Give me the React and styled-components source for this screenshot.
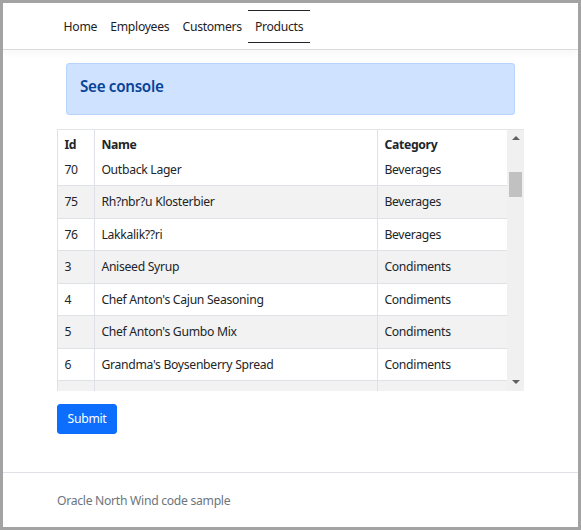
import React from 'react'
import styled, { createGlobalStyle } from 'styled-components'

const products = [
   { id: 70, name: 'Outback Lager', category: 'Beverages' },
   { id: 75, name: 'Rh?nbr?u Klosterbier', category: 'Beverages' },
   { id: 76, name: 'Lakkalik??ri', category: 'Beverages' },
   { id: 3, name: 'Aniseed Syrup', category: 'Condiments' },
   { id: 4, name: "Chef Anton's Cajun Seasoning", category: 'Condiments' },
   { id: 5, name: "Chef Anton's Gumbo Mix", category: 'Condiments' },
   { id: 6, name: "Grandma's Boysenberry Spread", category: 'Condiments' },
   // row below is scrolled almost out of view, only its background shows
   { id: null, name: '', category: '' },
]

const links = ['Home', 'Employees', 'Customers', 'Products']

function App() {
   return (
      <>
         <GlobalStyle />
         <Frame>
            <Nav>
               <Container>
                  {links.map((l) => (
                     <NavLink key={l} active={l === 'Products'}>
                        {l}
                     </NavLink>
                  ))}
               </Container>
            </Nav>
            <Main>
               <Container column>
                  <Alert>See console</Alert>
                  <TableBox>
                     <Viewport>
                        <HeadRow>
                           <Cell w={37} bold>Id</Cell>
                           <Cell w={283} bold>Name</Cell>
                           <Cell w={130} bold>Category</Cell>
                        </HeadRow>
                        <Rows>
                           {products.map((p, i) => (
                              <Row key={i} striped={i % 2 === 1}>
                                 <Cell w={37}>{p.id}</Cell>
                                 <Cell w={283}>{p.name}</Cell>
                                 <Cell w={130}>{p.category}</Cell>
                              </Row>
                           ))}
                        </Rows>
                     </Viewport>
                     <Scrollbar>
                        <Arrow />
                        <Track>
                           <Thumb />
                        </Track>
                        <Arrow down />
                     </Scrollbar>
                  </TableBox>
                  <Button>Submit</Button>
               </Container>
            </Main>
            <Footer>
               <Container>Oracle North Wind code sample</Container>
            </Footer>
         </Frame>
      </>
   )
}

export default App

const GlobalStyle = createGlobalStyle`
   * {
      box-sizing: border-box;
   }
   html, body {
      margin: 0;
      padding: 0;
      background: #fff;
   }
   body {
      font-family: "Segoe UI", "Noto Sans", "Open Sans", sans-serif;
      font-size: 12.2px;
      letter-spacing: -0.3px;
      line-height: 1.5;
      color: #212529;
   }
`
const Frame = styled.div`
   width: 581px;
   height: 530px;
   border: 3px solid #a3a3a3;
   display: flex;
   flex-direction: column;
   background: #fff;
   overflow: hidden;
`
const Container = styled.div`
   width: 467px;
   margin: 0 auto;
   display: flex;
   flex-direction: ${({ column }) => (column ? 'column' : 'row')};
   align-items: ${({ column }) => (column ? 'stretch' : 'center')};
`
const Nav = styled.nav`
   height: 47px;
   flex-shrink: 0;
   display: flex;
   align-items: center;
   border-bottom: 1px solid #dcdcdc;
   box-shadow: 0 3px 8px rgba(0, 0, 0, 0.04);
   position: relative;
   z-index: 1;
`
const NavLink = styled.a`
   display: block;
   padding: 6.4px 6.6px;
   line-height: 19.2px;
   color: #1e2125;
   cursor: pointer;
   border-top: 1px solid ${({ active }) => (active ? '#212529' : 'transparent')};
   border-bottom: 1px solid ${({ active }) => (active ? '#212529' : 'transparent')};
   margin-top: 1px;
`
const Main = styled.main`
   flex: 1;
   padding-top: 13px;
`
const Alert = styled.div`
   margin: 0 9px 14px;
   padding: 10px 13px 15.6px;
   background: #cfe2ff;
   border: 1px solid #b6d4fe;
   border-radius: 3px;
   color: #084298;
   font-size: 15.2px;
   font-weight: 600;
   letter-spacing: -0.3px;
   line-height: 24px;
`
const TableBox = styled.div`
   display: flex;
   height: 262px;
   border-top: 1px solid #e3e5e8;
   overflow: hidden;
`
const Viewport = styled.div`
   width: 450px;
   display: flex;
   flex-direction: column;
   overflow: hidden;
   border-left: 1px solid #dee2e6;
`
const HeadRow = styled.div`
   display: flex;
   height: 31.5px;
   flex-shrink: 0;
   background: #fff;
   position: relative;
   z-index: 1;
   & > div {
      padding-top: 5.4px;
   }
`
const Rows = styled.div`
   margin-top: -7.5px;
   display: flex;
   flex-direction: column;
`
const Row = styled.div`
   display: flex;
   height: 32.5px;
   flex-shrink: 0;
   background: ${({ striped }) => (striped ? '#f2f2f2' : '#fff')};
   border-bottom: 1px solid #dee2e6;
`
const Cell = styled.div`
   width: ${({ w }) => w}px;
   flex-shrink: 0;
   padding: 6.4px 6.4px;
   line-height: 19.2px;
   font-weight: ${({ bold }) => (bold ? 700 : 400)};
   border-right: 1px solid #dee2e6;
   white-space: nowrap;
   overflow: hidden;
`
const Scrollbar = styled.div`
   width: 17px;
   flex-shrink: 0;
   background: #f0f0f0;
   display: flex;
   flex-direction: column;
   align-items: center;
`
const Arrow = styled.div`
   height: 17px;
   flex-shrink: 0;
   display: flex;
   align-items: center;
   justify-content: center;
   &::before {
      content: '';
      border-left: 4px solid transparent;
      border-right: 4px solid transparent;
      ${({ down }) =>
         down ? 'border-top: 4px solid #606060;' : 'border-bottom: 4px solid #606060;'}
   }
`
const Track = styled.div`
   flex: 1;
   width: 100%;
   padding: 25px 2px 0;
`
const Thumb = styled.div`
   height: 25px;
   background: #c1c1c1;
`
const Button = styled.button`
   align-self: flex-start;
   margin-top: 13px;
   padding: 4.8px 9.6px;
   font-family: inherit;
   font-size: 12.2px;
   letter-spacing: -0.3px;
   line-height: 19.2px;
   color: #fff;
   background: #0d6efd;
   border: 1px solid #0d6efd;
   border-radius: 3px;
   cursor: pointer;
`
const Footer = styled.footer`
   height: 55px;
   flex-shrink: 0;
   border-top: 1px solid #dee2e6;
   padding-top: 17.6px;
   color: #6c757d;
   line-height: 19.2px;
`
